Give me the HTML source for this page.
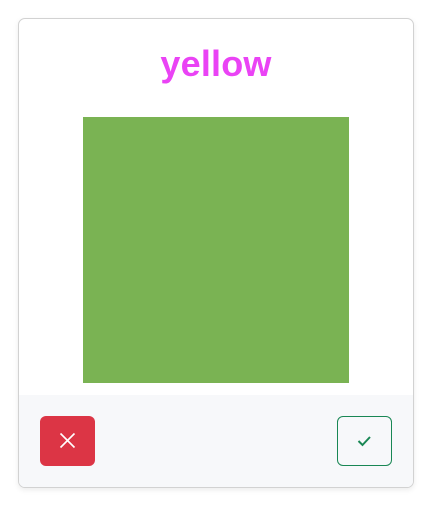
<!DOCTYPE html>
<html><head><style>
html,body{margin:0;padding:0;background:#fff;width:437px;height:506px;overflow:hidden;font-family:"Liberation Sans",sans-serif;}
.card{position:absolute;left:18px;top:18px;width:394px;height:468px;border:1px solid #d2d2d2;border-radius:7px;box-shadow:0 2px 6px rgba(0,0,0,0.08);overflow:hidden;background:#fff;}
.title{position:absolute;left:0;right:0;top:22px;text-align:center;font-size:36px;font-weight:bold;color:#ea43f5;line-height:46px;letter-spacing:0.2px;}
.sq{position:absolute;left:64px;top:98px;width:266px;height:266px;background:#7ab353;}
.foot{position:absolute;left:0;right:0;top:376px;bottom:0;background:#f7f8fa;}
.b1{position:absolute;left:21px;top:397px;width:55px;height:50px;background:#dc3545;border-radius:6px;}
.b2{position:absolute;left:318px;top:397px;width:53px;height:48px;border:1px solid #198754;border-radius:6px;}
svg{position:absolute;}
</style></head><body>
<div class="card">
<div class="title">yellow</div>
<div class="sq"></div>
<div class="foot"></div>
<div class="b1"><svg width="55" height="50"><path d="M20.5 17.5L34.5 31.5M34.5 17.5L20.5 31.5" stroke="#fff" stroke-width="1.6"/></svg></div>
<div class="b2"><svg width="53" height="48"><path d="M20.5 24L24.5 28L32 20" stroke="#198754" stroke-width="2" fill="none"/></svg></div>
</div>
</body></html>
